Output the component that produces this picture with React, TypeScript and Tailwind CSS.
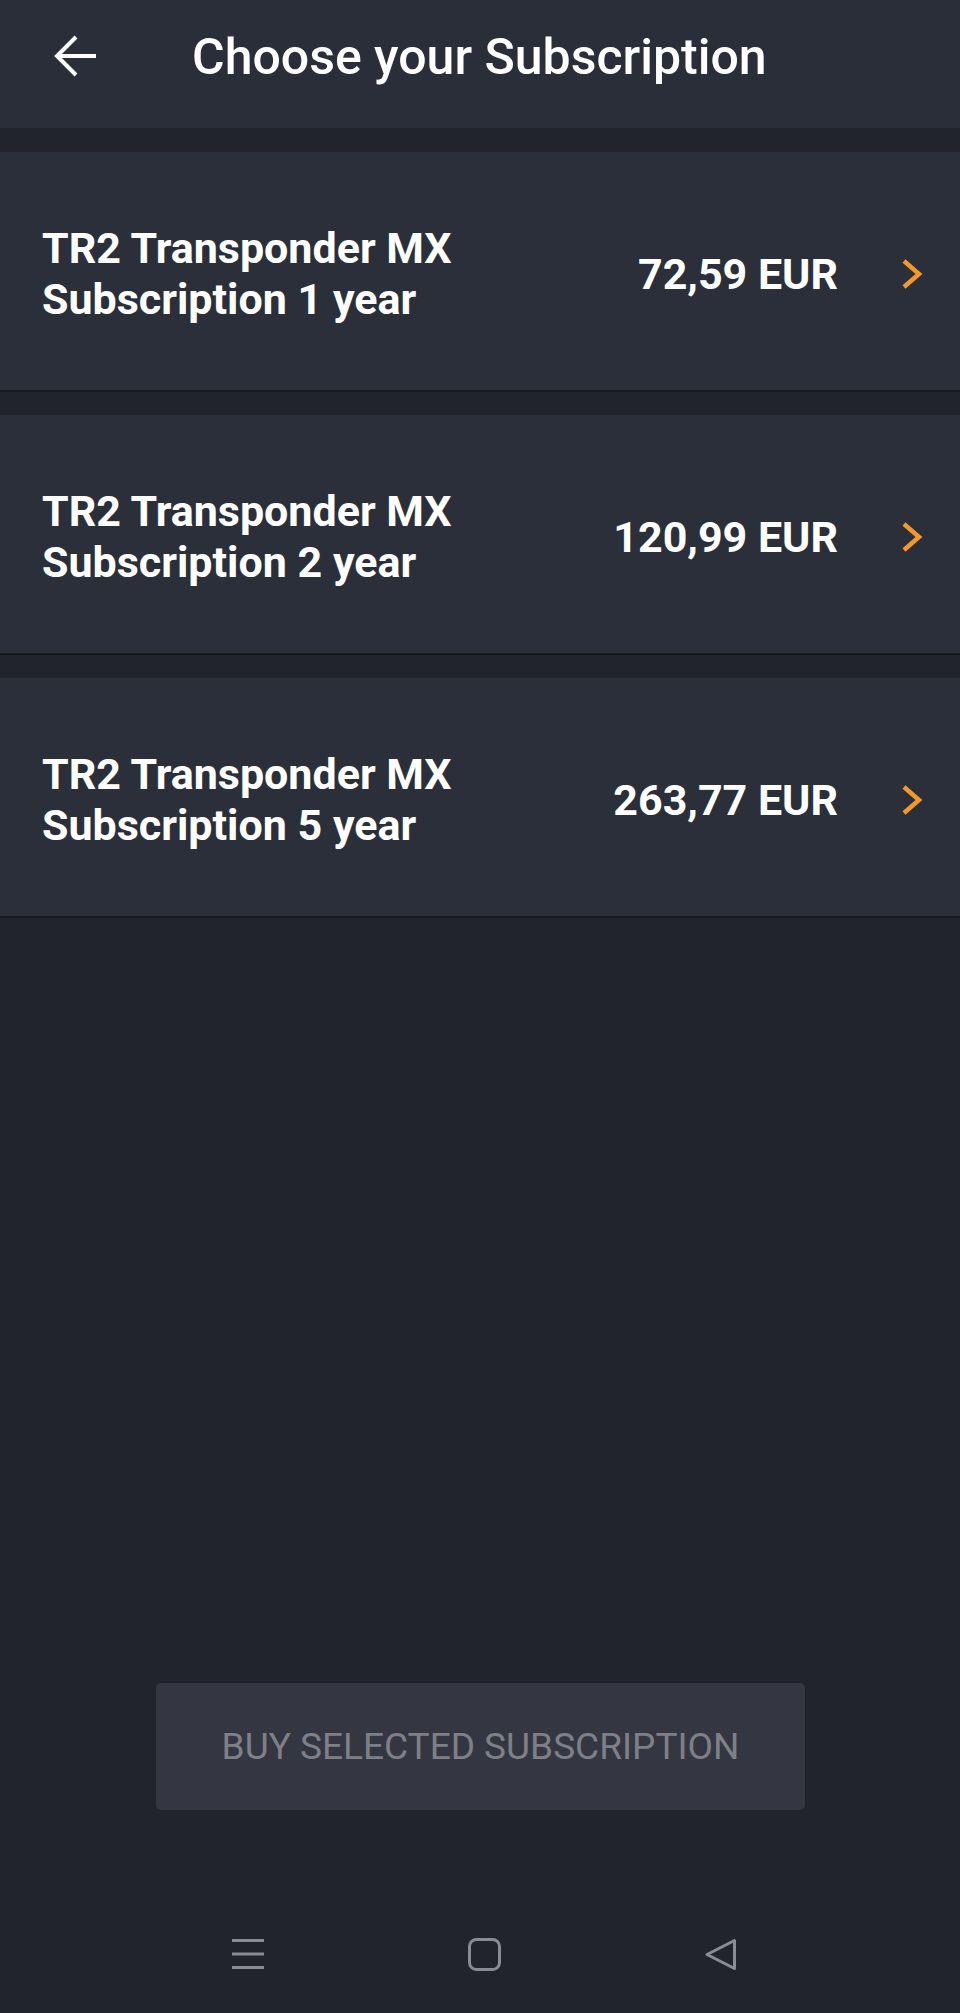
const plans = [
  { name: "TR2 Transponder MX", term: "Subscription 1 year", price: "72,59 EUR" },
  { name: "TR2 Transponder MX", term: "Subscription 2 year", price: "120,99 EUR" },
  { name: "TR2 Transponder MX", term: "Subscription 5 year", price: "263,77 EUR" },
];

function BackArrow() {
  return (
    <svg width="44" height="44" viewBox="0 0 44 44" fill="none" stroke="#ffffff" strokeWidth="4" strokeLinecap="butt">
      <path d="M43 22H4" />
      <path d="M23 3L4 22l19 19" />
    </svg>
  );
}

function Chevron() {
  return (
    <svg width="22" height="32" viewBox="0 0 22 32" fill="none" stroke="#f3992c" strokeWidth="4.5" strokeLinejoin="miter">
      <path d="M3 3l15 13L3 29" />
    </svg>
  );
}

export default function App() {
  return (
    <div
      className="w-[960px] h-[2013px] bg-[#21242c] flex flex-col"
      style={{ fontFamily: "Roboto, 'Noto Sans', sans-serif" }}
    >
      {/* HEADER */}
      <div className="h-[128px] bg-[#292e38] flex items-center shrink-0">
        <div className="w-[44px] ml-[53px] mb-[16px] flex items-center">
          <BackArrow />
        </div>
        <h1 className="ml-[95px] mb-[14px] text-[50px] font-medium text-white leading-none">
          Choose your Subscription
        </h1>
      </div>

      {/* PLANS */}
      <div className="flex flex-col gap-[23px] pt-[24px]">
        {plans.map((p) => (
          <div
            key={p.term}
            className="h-[240px] bg-[#2a2f39] border-b-2 border-[#17191e] flex items-center pl-[42px] pr-[37px] pt-[6px]"
          >
            <div className="flex-1 text-[43px] font-bold text-white leading-[51px]">
              <div>{p.name}</div>
              <div>{p.term}</div>
            </div>
            <div className="text-[43px] font-bold text-white leading-none">{p.price}</div>
            <div className="ml-[63px] flex items-center">
              <Chevron />
            </div>
          </div>
        ))}
      </div>

      <div className="flex-1" />

      {/* BUY */}
      <div className="flex justify-center">
        <button
          disabled
          className="w-[649px] h-[127px] ml-[1px] rounded-[5px] bg-[#343741] text-[#7e8087] text-[37px] uppercase"
        >
          Buy selected subscription
        </button>
      </div>

      {/* NAV BAR */}
      <div className="h-[118px] mt-[85px] pl-[8px] flex items-center justify-center gap-[203px] shrink-0">
        <svg width="34" height="32" viewBox="0 0 34 32" stroke="#8a8c93" strokeWidth="3">
          <path d="M1 2.5h32M1 16h32M1 29.5h32" />
        </svg>
        <svg width="33" height="33" viewBox="0 0 33 33" fill="none" stroke="#8a8c93" strokeWidth="3">
          <rect x="1.5" y="1.5" width="30" height="30" rx="7" />
        </svg>
        <svg width="34" height="33" viewBox="0 0 34 33" fill="none" stroke="#8a8c93" strokeWidth="3" strokeLinejoin="round">
          <path d="M30.5 2.5L3 16.5l27.5 14z" />
        </svg>
      </div>
    </div>
  );
}
